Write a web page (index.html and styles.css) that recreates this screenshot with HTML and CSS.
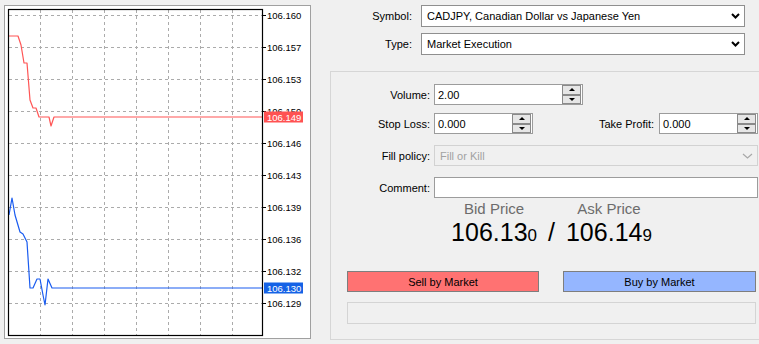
FILE: index.html
```html
<!DOCTYPE html>
<html>

<head>
    <meta charset="UTF-8">
    <link rel="stylesheet" href="styles.css">
</head>

<body>

    <div class="chart-box">
        <svg class="chart" width="305" height="332" viewBox="5 6 305 332">
            <g class="grid">
                <path d="M40.5 10V335M72.5 10V335M104.5 10V335M136.5 10V335M168.5 10V335M200.5 10V335M232.5 10V335" />
                <path d="M9 15.5H262M9 47.5H262M9 79.5H262M9 111.5H262M9 143.5H262M9 175.5H262M9 207.5H262M9 239.5H262M9 271.5H262M9 303.5H262" />
            </g>
            <path class="ticks" d="M263 15.5H266M263 47.5H266M263 79.5H266M263 111.5H266M263 143.5H266M263 175.5H266M263 207.5H266M263 239.5H266M263 271.5H266M263 303.5H266" />
            <g class="axis">
                <text x="267" y="19">106.160</text>
                <text x="267" y="51">106.157</text>
                <text x="267" y="83">106.153</text>
                <text x="267" y="115">106.150</text>
                <text x="267" y="147">106.146</text>
                <text x="267" y="179">106.143</text>
                <text x="267" y="211">106.139</text>
                <text x="267" y="243">106.136</text>
                <text x="267" y="275">106.132</text>
                <text x="267" y="307">106.129</text>
            </g>
            <polyline class="ask-line" points="9,36 18,36 21,45 24,63 27,63 30,100 33,108 36,108 39,117 49,117 51,126 54,117 263,117" />
            <polyline class="bid-line" points="9,215 12,198 15,215 20,232 23,234 27,242 30,288 33,288 37,279 40,279 43,295 45,305 48,279 52,288 263,288" />
            <rect class="frame" x="8.5" y="9.5" width="254" height="326" />
            <rect class="ask-tag" x="264" y="111.5" width="39" height="11" />
            <text class="tag-text" x="267" y="120.5">106.149</text>
            <rect class="bid-tag" x="264" y="282.5" width="39" height="11" />
            <text class="tag-text" x="267" y="291.5">106.130</text>
        </svg>
    </div>

    <div class="order">
        <div class="top-row">
            <span class="lbl">Symbol:</span>
            <div class="select">
                <span>CADJPY, Canadian Dollar vs Japanese Yen</span>
                <svg width="9" height="6" viewBox="0 0 9 6"><polyline points="1,1 4.5,4.5 8,1" /></svg>
            </div>
        </div>
        <div class="top-row">
            <span class="lbl">Type:</span>
            <div class="select">
                <span>Market Execution</span>
                <svg width="9" height="6" viewBox="0 0 9 6"><polyline points="1,1 4.5,4.5 8,1" /></svg>
            </div>
        </div>

        <div class="panel">
            <div class="field">
                <span class="lbl">Volume:</span>
                <div class="input w-vol">
                    <span>2.00</span>
                    <div class="spin"><span class="up"></span><span class="dn"></span></div>
                </div>
            </div>
            <div class="field row-sl">
                <span class="lbl">Stop Loss:</span>
                <div class="input w-sl">
                    <span>0.000</span>
                    <div class="spin"><span class="up"></span><span class="dn"></span></div>
                </div>
                <span class="lbl lbl-tp">Take Profit:</span>
                <div class="input w-sl">
                    <span>0.000</span>
                    <div class="spin"><span class="up"></span><span class="dn"></span></div>
                </div>
            </div>
            <div class="field row-gap">
                <span class="lbl">Fill policy:</span>
                <div class="select disabled">
                    <span>Fill or Kill</span>
                    <svg width="11" height="6" viewBox="0 0 11 6"><polyline points="1,1 5.5,5 10,1" /></svg>
                </div>
            </div>
            <div class="field row-gap">
                <span class="lbl">Comment:</span>
                <div class="input w-full"></div>
            </div>

            <div class="trade">
                <div class="prices">
                    <div class="quote">
                        <div class="quote-name">Bid Price</div>
                        <div class="quote-value">106.13<small>0</small></div>
                    </div>
                    <div class="slash">/</div>
                    <div class="quote">
                        <div class="quote-name">Ask Price</div>
                        <div class="quote-value">106.14<small>9</small></div>
                    </div>
                </div>
                <div class="buttons">
                    <div class="btn sell">Sell by Market</div>
                    <div class="btn buy">Buy by Market</div>
                </div>
                <div class="status"></div>
            </div>
        </div>
    </div>

</body>

</html>
```

FILE: styles.css
```css
body {
    margin: 0;
    height: 344px;
    overflow: hidden;
    display: flex;
    background-color: #f0f0f0;
    font-family: "Liberation Sans", Arial, sans-serif;
    font-size: 11px;
    color: #000;
}

/* chart */

.chart-box {
    flex: none;
    margin: 5px 0 0 4px;
    width: 305px;
    height: 332px;
    border: 1px solid #a0a0a0;
    background-color: #fff;
}

.chart {
    display: block;
}

.grid path {
    fill: none;
    stroke: #ababab;
    stroke-width: 1;
    stroke-dasharray: 3 3;
}

.ticks {
    stroke: #000;
    stroke-width: 1;
}

.frame {
    fill: none;
    stroke: #000;
    stroke-width: 1.2;
}

.axis text,
.tag-text {
    font-family: "Liberation Sans", Arial, sans-serif;
    font-size: 9.5px;
    fill: #000;
}

.tag-text {
    fill: #fff;
}

.ask-line,
.bid-line {
    fill: none;
    stroke-width: 1.2;
    stroke-linejoin: round;
}

.ask-line {
    stroke: #ff5555;
}

.bid-line {
    stroke: #1a5cf0;
}

.ask-tag {
    fill: #ff5252;
}

.bid-tag {
    fill: #1562e6;
}

/* order form */

.order {
    flex: none;
    width: 448px;
}

.top-row {
    display: flex;
    align-items: center;
    margin-top: 5px;
}

.top-row + .top-row {
    margin-top: 6px;
}

.top-row .lbl {
    width: 101px;
    margin-right: 9px;
    text-align: right;
}

.select {
    box-sizing: border-box;
    display: flex;
    align-items: center;
    justify-content: space-between;
    width: 324px;
    height: 22px;
    padding: 0 4px 0 5px;
    border: 1px solid #8f8f8f;
    background-color: #fff;
}

.select polyline {
    fill: none;
    stroke: #000;
    stroke-width: 2;
}

.select.disabled {
    border-color: #d2d2d2;
    background-color: #f0f0f0;
    color: #a2a2a2;
}

.select.disabled polyline {
    stroke: #a8a8a8;
    stroke-width: 1.2;
}

.panel {
    box-sizing: border-box;
    margin: 16px 0 0 19px;
    width: 460px;
    height: 269px;
    padding-top: 12px;
    border: 1px solid #d6d6d6;
}

.field {
    display: flex;
    align-items: center;
    height: 21px;
}

.row-sl {
    margin-top: 8px;
}

.row-gap {
    margin-top: 11px;
}

.field .lbl {
    flex: none;
    width: 99px;
    margin-right: 4px;
    text-align: right;
}

.field .lbl-tp {
    width: 121px;
    margin-right: 5px;
}

.field .select {
    height: 21px;
}

.input {
    box-sizing: border-box;
    display: flex;
    align-items: center;
    height: 21px;
    padding-left: 3px;
    border: 1px solid #9c9c9c;
    background-color: #fff;
}

.w-vol {
    width: 149px;
}

.w-sl {
    width: 99px;
}

.w-full {
    width: 324px;
}

.spin {
    display: flex;
    flex-direction: column;
    width: 19px;
    height: 19px;
    margin-left: auto;
    margin-right: 1px;
}

.spin span {
    flex: 1;
    display: flex;
    align-items: center;
    justify-content: center;
    border: 1px solid #8a8a8a;
    background-color: #e6e6e6;
}

.spin span::after {
    content: "";
    border-left: 3px solid transparent;
    border-right: 3px solid transparent;
    border-bottom: 3px solid #000;
}

.spin .dn::after {
    border-bottom: 0;
    border-top: 3px solid #000;
}

/* prices and buttons */

.trade {
    width: 409px;
    margin-left: 16px;
}

.prices {
    display: flex;
    justify-content: center;
    align-items: flex-end;
    margin-top: 2px;
}

.quote {
    text-align: center;
}

.quote-name {
    font-size: 15px;
    line-height: 17px;
    color: #6c6c6c;
}

.quote-value,
.slash {
    height: 30px;
    font-size: 25px;
    line-height: 30px;
}

.quote-value small {
    font-size: 17px;
    line-height: 1;
}

.slash {
    margin: 0 11px;
}

.buttons {
    display: flex;
    justify-content: space-between;
    margin-top: 24px;
}

.btn {
    box-sizing: border-box;
    display: flex;
    align-items: center;
    justify-content: center;
    height: 21px;
    border: 1px solid #7e7e7e;
}

.sell {
    width: 192px;
    background-color: #ff7272;
}

.buy {
    width: 193px;
    background-color: #95b6ff;
}

.status {
    box-sizing: border-box;
    height: 22px;
    margin-top: 10px;
    border: 1px solid #d4d4d4;
}
```
